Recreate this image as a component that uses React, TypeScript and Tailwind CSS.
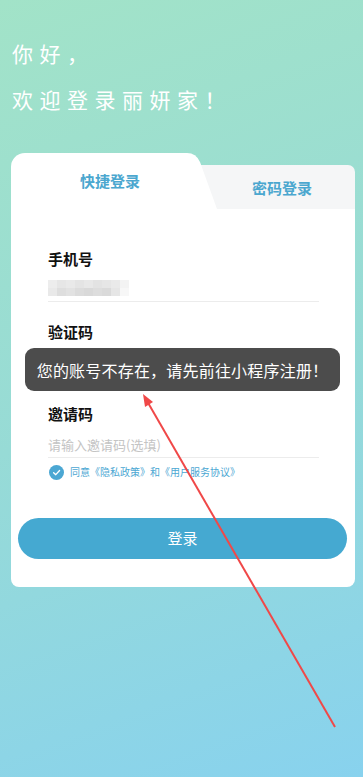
import React from "react";

const blur = [
  ["#ededed", "#e6e6e6", "#e9e9e9", "#e4e4e4", "#e8e8e8", "#e3e3e3", "#e6e6e6", "#eaeaea", "#f3f3f3"],
  ["#e9e9e9", "#dedede", "#e2e2e2", "#dcdcdc", "#d9d9d9", "#dddddd", "#dadada", "#e6e6e6", "#f7f7f7"],
];

export default function App() {
  return (
    <div
      className="relative w-[363px] h-[777px] overflow-hidden bg-[linear-gradient(160deg,#a2e3c8_0%,#97dbd6_50%,#88d2ee_100%)]"
      style={{ fontFamily: '"Noto Sans CJK SC", "Noto Sans", sans-serif' }}
    >
      {/* Header */}
      <div className="pt-[39px] pl-[12px] text-white text-[21px] leading-[28px] tracking-[6.5px]">
        <div>你好，</div>
        <div className="mt-[18px]">欢迎登录丽妍家！</div>
      </div>

      {/* Card */}
      <div className="mx-[11px] mt-[40px] w-[344px]">
        {/* Tabs */}
        <div className="grid h-[56px]">
          <div className="col-start-1 row-start-1 ml-[184px] mt-[12px] h-[44px] bg-[#f5f6f7] rounded-tr-[7px] flex items-center justify-center pl-[14px] pt-[3px] text-[15px] font-bold text-[#4ba7cf]">
            密码登录
          </div>
          <div
            className="col-start-1 row-start-1 w-[206px] h-[56px] bg-white rounded-tl-[14px] flex justify-center pr-[8px] pt-[17px] text-[15px] font-bold text-[#4ba7cf] leading-[22px]"
            style={{ clipPath: 'path("M0 0 H176 Q185 0 189 9 L206 56 H0 Z")' }}
          >
            快捷登录
          </div>
        </div>

        {/* Body */}
        <div className="bg-white rounded-b-[8px] pb-[28px]">
          <div className="pl-[37px] pr-[36px]">
            <div className="pt-[39px] text-[15px] font-bold leading-[22px] text-[#111]">手机号</div>
            <div className="h-[32px] border-b border-[#ececec] flex items-end pb-[5px]">
              <div className="flex flex-col">
                {blur.map((row, i) => (
                  <div key={i} className="flex">
                    {row.map((c, j) => (
                      <div key={j} className="w-[9px] h-[8px]" style={{ background: c }} />
                    ))}
                  </div>
                ))}
              </div>
            </div>

            <div className="mt-[19px] text-[15px] font-bold leading-[22px] text-[#111]">验证码</div>
            <div className="h-[40px] border-b border-[#ececec]" />

            <div className="mt-[20px] text-[15px] font-bold leading-[22px] text-[#111]">邀请码</div>
            <div className="h-[33px] border-b border-[#ececec] flex items-end pb-[3px] text-[13px] leading-[18px] text-[#c4c4c4]">
              请输入邀请码(选填)
            </div>

            <div className="mt-[6px] h-[16px] flex items-center">
              <div className="w-[15px] h-[15px] rounded-full bg-[#4ba7d3] flex items-center justify-center ml-[1px]">
                <svg width="9" height="9" viewBox="0 0 10 10">
                  <path d="M1.8 5.2 L4.2 7.4 L8.4 2.8" fill="none" stroke="white" strokeWidth="1.5" strokeLinecap="round" strokeLinejoin="round" />
                </svg>
              </div>
              <span className="ml-[6px] text-[10px] leading-[14px] text-[#4ba7d3]">
                同意《隐私政策》和《用户服务协议》
              </span>
            </div>
          </div>

          <button className="mt-[38px] mx-[7px] w-[329px] h-[41px] rounded-full bg-[#45a9d1] text-white text-[15px] flex items-center justify-center">
            登录
          </button>
        </div>
      </div>

      {/* Toast */}
      <div className="absolute left-[25px] top-[348px] w-[315px] h-[43px] rounded-[9px] bg-[#4c4c4c] flex items-center justify-center text-white text-[16px] tracking-[0.2px]">
        您的账号不存在，请先前往小程序注册！
      </div>

      {/* Annotation arrow */}
      <svg className="absolute left-0 top-0 pointer-events-none" width="363" height="777">
        <line x1="335" y1="727" x2="147" y2="401" stroke="#f04848" strokeWidth="2" />
        <polygon points="143,394 153,402 145,407" fill="#f04848" />
      </svg>
    </div>
  );
}
